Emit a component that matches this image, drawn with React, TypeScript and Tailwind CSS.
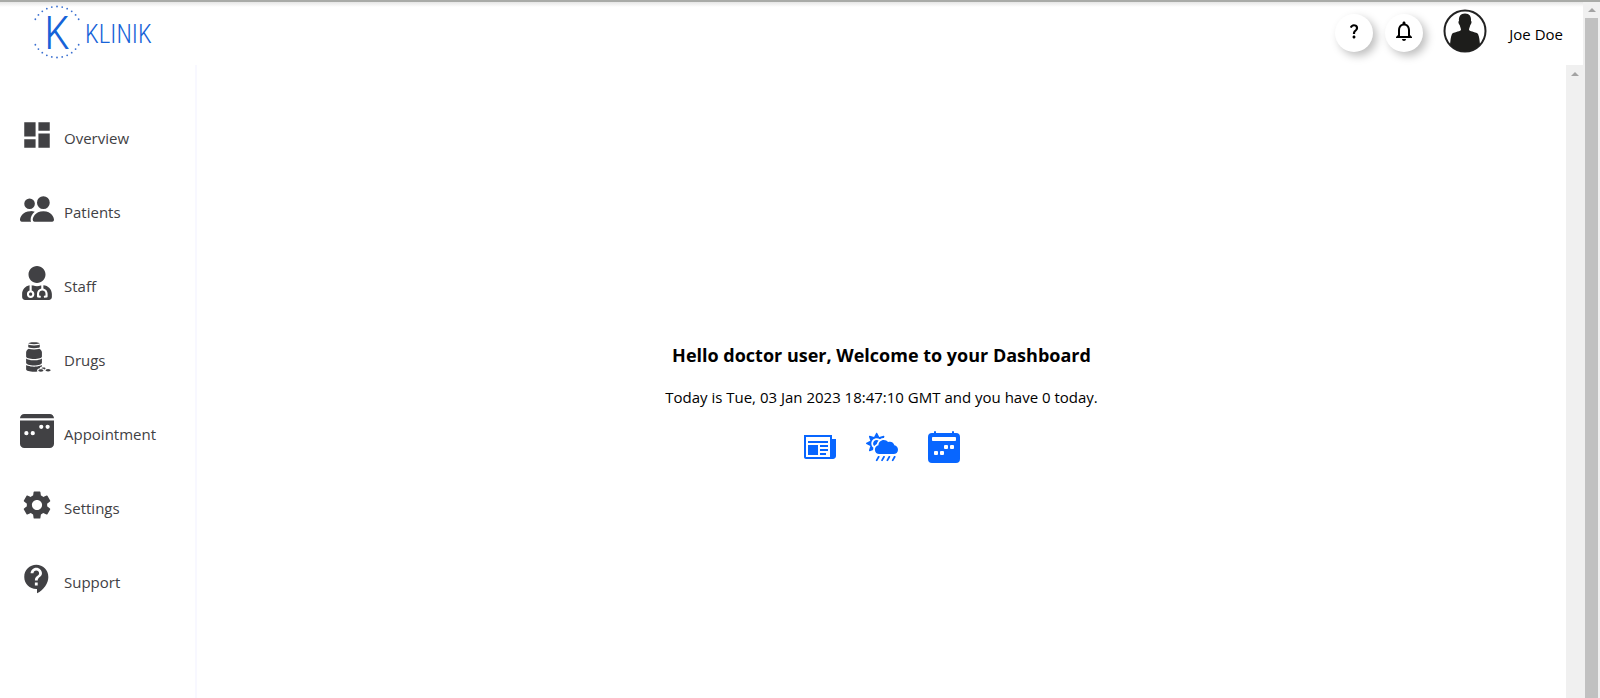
import type { ReactNode } from "react";
import type { IconType } from "react-icons";
import { BsCalendar2WeekFill, BsCalendar3WeekFill, BsPeopleFill } from "react-icons/bs";
import { FaCloudSunRain, FaUserMd } from "react-icons/fa";
import { GiMedicinePills } from "react-icons/gi";
import { ImNewspaper } from "react-icons/im";
import { MdContactSupport, MdDashboard, MdNotificationsNone, MdQuestionMark, MdSettings } from "react-icons/md";

const navItems: { label: string; icon: IconType }[] = [
  { label: "Overview", icon: MdDashboard },
  { label: "Patients", icon: BsPeopleFill },
  { label: "Staff", icon: FaUserMd },
  { label: "Drugs", icon: GiMedicinePills },
  { label: "Appointment", icon: BsCalendar3WeekFill },
  { label: "Settings", icon: MdSettings },
  { label: "Support", icon: MdContactSupport },
];

const quickLinks: { label: string; icon: IconType }[] = [
  { label: "News", icon: ImNewspaper },
  { label: "Weather", icon: FaCloudSunRain },
  { label: "Calendar", icon: BsCalendar2WeekFill },
];

// Dots run along the upper and lower arcs of the ring and leave the sides open.
const arcAngles = [-150, -138, -126, -114, -102, -90, -78, -66, -54, -42, -30];
const ringDots = [...arcAngles, ...arcAngles.map((a) => -a)].map((a) => {
  const r = (a * Math.PI) / 180;
  return { x: 26 + 25 * Math.cos(r), y: 27 + 25.5 * Math.sin(r) };
});

function Logo() {
  return (
    <a
      href="#"
      aria-label="Klinik"
      className="flex items-center gap-[2px] font-['Roboto_Condensed','Liberation_Sans_Narrow','Liberation_Sans',sans-serif] font-light text-[#1763d8]"
    >
      <svg className="overflow-visible" width="52" height="54" viewBox="0 0 52 54" aria-hidden="true">
        {ringDots.map((d, i) => (
          <circle key={i} cx={d.x} cy={d.y} r="0.9" fill="#3a6fd0" />
        ))}
        <text x="26" y="44" textAnchor="middle" fontSize="47" fill="currentColor">
          K
        </text>
      </svg>
      <span className="pt-1 text-[25px] leading-none">KLINIK</span>
    </a>
  );
}

function RoundButton({ label, children }: { label: string; children: ReactNode }) {
  return (
    <button
      type="button"
      aria-label={label}
      className="flex size-[38px] items-center justify-center rounded-full bg-white pb-1 shadow-[4px_4px_8px_rgba(0,0,0,0.25)]"
    >
      {children}
    </button>
  );
}

function UpArrow() {
  return (
    <svg width="8" height="4" viewBox="0 0 8 4" aria-hidden="true">
      <path d="M0 4L4 0L8 4Z" fill="#a3a3a3" />
    </svg>
  );
}

export default function App() {
  return (
    <div className="flex h-screen overflow-hidden bg-white font-['Open_Sans','Noto_Sans',sans-serif] text-[15px] text-black">
      <div className="flex min-w-0 flex-1 flex-col">
        <header className="flex h-[65px] shrink-0 items-start justify-between border-t-2 border-[#a9aba8] bg-[linear-gradient(#e6e6e6,#ffffff_5px)] pt-[3px] pr-5 pl-[31px]">
          <Logo />
          <div className="flex items-center pt-1">
            <div className="flex gap-3 pt-1">
              <RoundButton label="Help">
                <MdQuestionMark size={18} />
              </RoundButton>
              <RoundButton label="Notifications">
                <MdNotificationsNone size={24} />
              </RoundButton>
            </div>
            <svg className="ml-5" width="44" height="44" viewBox="0 0 44 44" aria-hidden="true">
              <circle cx="22" cy="22" r="20.500" fill="#fff" stroke="#222" strokeWidth="2" />
              <path
                d="M22 4.500C26.500 4.500 28.500 7.500 28 12C29 12 28.500 15 27.300 16C27 18 26 19 26 21C28 23 33.500 23 35 25C36.500 28 36.500 32 37 35.500C33 40 28 42 22 42C16 42 11 40 7 35.500C7.500 32 7.500 28 9 25C10.500 23 16 23 18 21C18 19 17 18 16.700 16C15.500 15 15 12 16 12C15.500 7.500 17.500 4.500 22 4.500Z"
                fill="#1d1d1b"
              />
            </svg>
            <span className="ml-[22px] pt-[6px]">Joe Doe</span>
          </div>
        </header>
        <div className="flex min-h-0 flex-1">
          <nav className="w-[197px] shrink-0 border-r-2 border-[#f8f8ff] pt-[53px] pl-5 text-[#414144]">
            <ul className="flex flex-col gap-10">
              {navItems.map(({ label, icon: Icon }) => (
                <li key={label}>
                  <a href="#" className="flex items-end gap-[10px]">
                    <Icon size={34} />
                    <span className="leading-7">{label}</span>
                  </a>
                </li>
              ))}
            </ul>
          </nav>
          <main className="flex flex-1 flex-col items-center justify-center pt-10">
            <h1 className="text-lg font-bold">Hello doctor user, Welcome to your Dashboard</h1>
            <p className="mt-4 leading-6">Today is Tue, 03 Jan 2023 18:47:10 GMT and you have 0 today.</p>
            <div className="mt-[22px] flex gap-[30px] text-[#0866ff]">
              {quickLinks.map(({ label, icon: Icon }) => (
                <a key={label} href="#" aria-label={label}>
                  <Icon size={32} />
                </a>
              ))}
            </div>
          </main>
          <div className="flex w-[17px] shrink-0 justify-center bg-[#f0f0f0] pt-[7px]">
            <UpArrow />
          </div>
        </div>
      </div>
      <div className="flex w-[17px] shrink-0 flex-col items-center border-t-2 border-[#a9aba8] bg-[#f0f0f0]">
        <div className="flex h-4 items-center">
          <UpArrow />
        </div>
        <div className="w-[13px] flex-1 bg-[#c1c1c1]" />
      </div>
    </div>
  );
}
